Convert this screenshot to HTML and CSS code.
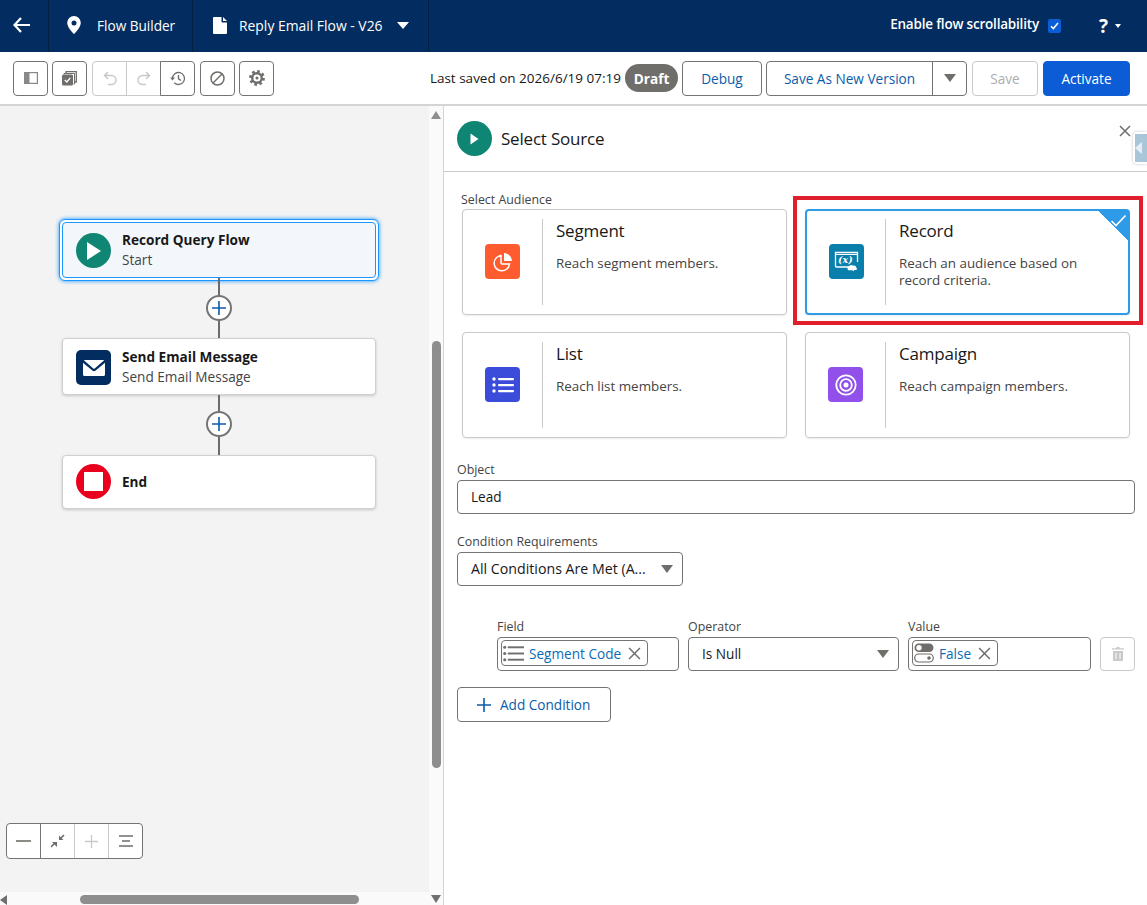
FILE: index.html
```html
<!DOCTYPE html>
<html lang="en">
<head>
    <meta charset="UTF-8">
    <meta name="viewport" content="width=device-width, initial-scale=1.0">
    <title>Flow Builder</title>
    <link rel="stylesheet" href="styles.css">
</head>
<body>

<header class="topbar">
    <div class="top-cell back-cell">
        <svg width="20" height="18" viewBox="0 0 20 18"><path d="M9 2 2.5 9 9 16M3 9h15" fill="none" stroke="#fff" stroke-width="2.2"/></svg>
    </div>
    <div class="top-cell app-cell">
        <svg width="14" height="18" viewBox="0 0 14 18"><path fill-rule="evenodd" fill="#fff" d="M7 0a6.8 6.8 0 0 0-6.8 6.8C.2 11 5 16.300 7 18c2-1.700 6.800-7 6.800-11.200A6.800 6.800 0 0 0 7 0zm0 4.400a2.500 2.500 0 1 1 0 5 2.500 2.500 0 0 1 0-5z"/></svg>
        <span>Flow Builder</span>
    </div>
    <div class="top-cell file-cell">
        <svg width="14" height="17" viewBox="0 0 14 17"><path fill="#fff" d="M1 0h7.500v4.500a1 1 0 0 0 1 1H14V16a1 1 0 0 1-1 1H1a1 1 0 0 1-1-1V1a1 1 0 0 1 1-1zm9 0 4 4h-4z"/></svg>
        <span>Reply Email Flow - V26</span>
        <i class="caret-white"></i>
    </div>
    <div class="top-right">
        <span class="scroll-label">Enable flow scrollability</span>
        <span class="check-box">
            <svg width="9" height="8" viewBox="0 0 9 8"><path d="M1 4.200 3.400 6.600 8 1" fill="none" stroke="#fff" stroke-width="1.500"/></svg>
        </span>
        <span class="help">?</span>
        <i class="caret-small"></i>
    </div>
</header>

<div class="toolbar">
    <button class="tool-btn">
        <svg width="14" height="12" viewBox="0 0 14 12"><rect x=".6" y=".6" width="12.800" height="10.800" fill="none" stroke="#8a8886" stroke-width="1.200"/><rect x="1" y="1" width="4.500" height="10" fill="#8a8886"/></svg>
    </button>
    <button class="tool-btn">
        <svg width="15" height="15" viewBox="0 0 15 15"><path d="M4 2.500V.7h10.300V11h-1.800" fill="none" stroke="#706e6b" stroke-width="1.300"/><path d="M2 3.500V2.500h10.500V13h-1" fill="none" stroke="#706e6b" stroke-width="1"/><rect x="0" y="3.500" width="11" height="11" rx="1.500" fill="#706e6b"/><path d="M2.800 9 4.800 11 8.300 6.800" fill="none" stroke="#fff" stroke-width="1.300"/></svg>
    </button>
    <div class="tool-group">
        <button class="tool-btn off">
            <svg width="14" height="15" viewBox="0 0 14 15"><path d="M5 1 1.500 4.500 5 8M2 4.500h6.500a4.500 4.500 0 0 1 0 9H5" fill="none" stroke="#c9c9c9" stroke-width="1.500"/></svg>
        </button>
        <button class="tool-btn off">
            <svg width="14" height="15" viewBox="0 0 14 15"><path d="M9 1l3.500 3.500L9 8M12 4.500H5.500a4.500 4.500 0 0 0 0 9H9" fill="none" stroke="#c9c9c9" stroke-width="1.500"/></svg>
        </button>
        <button class="tool-btn">
            <svg width="16" height="15" viewBox="0 0 16 15"><path d="M2.500 7.500a6 6 0 1 1 1.800 4.300" fill="none" stroke="#706e6b" stroke-width="1.300"/><path d="M0 6.500h5L2.500 9.500z" fill="#706e6b"/><path d="M8.500 4v3.800l2.500 1.700" fill="none" stroke="#706e6b" stroke-width="1.400"/></svg>
        </button>
    </div>
    <button class="tool-btn">
        <svg width="15" height="15" viewBox="0 0 15 15"><circle cx="7.500" cy="7.500" r="6.500" fill="none" stroke="#706e6b" stroke-width="1.500"/><path d="M3 12 12 3" stroke="#706e6b" stroke-width="1.500"/></svg>
    </button>
    <button class="tool-btn">
        <svg width="16" height="16" viewBox="0 0 16 16"><circle cx="8" cy="8" r="4.800" fill="none" stroke="#706e6b" stroke-width="2.400"/><circle cx="8" cy="8" r="6.600" fill="none" stroke="#706e6b" stroke-width="2.600" stroke-dasharray="2.600 2.580"/><circle cx="8" cy="8" r="1.500" fill="#706e6b"/></svg>
    </button>
    <div class="toolbar-right">
        <span class="saved">Last saved on 2026/6/19 07:19</span>
        <span class="draft-pill">Draft</span>
        <button class="btn debug-btn">Debug</button>
        <div class="split-btn">
            <button class="btn-inner">Save As New Version</button>
            <button class="btn-arrow"><i class="caret-grey"></i></button>
        </div>
        <button class="btn save-btn" disabled>Save</button>
        <button class="btn activate-btn">Activate</button>
    </div>
</div>

<div class="workspace">
    <div class="canvas-area">
        <div class="canvas">
            <div class="flow">
                <div class="node-focus">
                    <div class="node node-start">
                        <span class="node-icon round teal">
                            <svg width="16" height="20" viewBox="0 0 16 20"><path d="M1 1v18l14-9z" fill="#fff"/></svg>
                        </span>
                        <div>
                            <div class="node-title">Record Query Flow</div>
                            <div class="node-sub">Start</div>
                        </div>
                    </div>
                </div>
                <div class="connector first"><span class="add-step"><svg width="16" height="16" viewBox="0 0 16 16"><path d="M8 1v14M1 8h14" stroke="#0b5cab" stroke-width="1.600"/></svg></span></div>
                <div class="node node-email">
                    <span class="node-icon square navy">
                        <svg width="22" height="16" viewBox="0 0 22 16"><path fill="#fff" d="M1.500 0h19c.4 0 .6.300.4.600L11.700 8.500a1 1 0 0 1-1.400 0L1.100.6C.9.300 1.100 0 1.500 0zM0 2.800l9.300 7.700a2.600 2.600 0 0 0 3.400 0L22 2.800V14.500a1.500 1.500 0 0 1-1.500 1.500h-19A1.500 1.500 0 0 1 0 14.500z"/></svg>
                    </span>
                    <div>
                        <div class="node-title">Send Email Message</div>
                        <div class="node-sub">Send Email Message</div>
                    </div>
                </div>
                <div class="connector"><span class="add-step"><svg width="16" height="16" viewBox="0 0 16 16"><path d="M8 1v14M1 8h14" stroke="#0b5cab" stroke-width="1.600"/></svg></span></div>
                <div class="node node-end">
                    <span class="node-icon round red"><i class="stop"></i></span>
                    <div class="node-title">End</div>
                </div>
            </div>
            <div class="zoom-bar">
                <button class="zoom-btn"><svg width="15" height="2" viewBox="0 0 15 2"><path d="M0 1h15" stroke="#706e6b" stroke-width="1.600"/></svg></button>
                <button class="zoom-btn"><svg width="14" height="14" viewBox="0 0 14 14"><path d="M13 1 9 5M0 13l4-4" stroke="#706e6b" stroke-width="1.600"/><path d="M8 1.500V6h4.500zM1 8h5v5z" fill="#706e6b"/></svg></button>
                <button class="zoom-btn"><svg width="13" height="13" viewBox="0 0 13 13"><path d="M6.500 0v13M0 6.500h13" stroke="#c9c9c9" stroke-width="1.300"/></svg></button>
                <button class="zoom-btn"><svg width="14" height="12" viewBox="0 0 14 12"><path d="M0 1h14M3 6h8M0 11h14" stroke="#706e6b" stroke-width="1.500"/></svg></button>
            </div>
        </div>
        <div class="hscroll">
            <i class="arrow-left"></i>
            <span class="hthumb"></span>
        </div>
    </div>

    <div class="vscroll">
        <i class="arrow-up"></i>
        <span class="vthumb"></span>
        <i class="arrow-down"></i>
    </div>

    <aside class="panel">
        <div class="panel-head">
            <span class="panel-icon">
                <svg width="9" height="12" viewBox="0 0 9 12"><path d="M.5.500v11L8.500 6z" fill="#fff"/></svg>
            </span>
            <h2>Select Source</h2>
            <svg class="panel-close" width="12" height="12" viewBox="0 0 12 12"><path d="M1 1l10 10M11 1 1 11" stroke="#706e6b" stroke-width="1.500"/></svg>
            <span class="side-tab"><i></i></span>
        </div>

        <div class="panel-body">
            <div class="audience-label">Select Audience</div>
            <div class="audience-grid">
                <div class="audience-card">
                    <div class="card-icon-col">
                        <span class="card-icon orange">
                            <svg width="22" height="22" viewBox="0 0 22 22"><path d="M9 4.500a7.700 7.700 0 1 0 8.500 8.500H10a1 1 0 0 1-1-1z" fill="none" stroke="#fff" stroke-width="1.500"/><path d="M12 2c4.500.3 7.700 3.500 8 8h-8z" fill="#fff"/></svg>
                        </span>
                    </div>
                    <div class="card-text">
                        <h3>Segment</h3>
                        <p>Reach segment members.</p>
                    </div>
                </div>
                <div class="audience-card selected">
                    <div class="card-icon-col">
                        <span class="card-icon blue">
                            <svg width="25" height="23" viewBox="0 0 25 23"><path d="M14 17H2.500a1 1 0 0 1-1-1V2.500h22V12" fill="none" stroke="#fff" stroke-width="1.300"/><path d="M1.500 4.500h22" stroke="#fff" stroke-width="1"/><path d="M13.500 18c0-1.500 1-2.300 2.200-2.300.500-.900 2.500-1.200 3.300 0 1.500-.500 3.300.500 3.300 2 1 .200 1 2.300-.500 2.400h-1.500l-.8 1.200-1-1h-3.800c-1 0-1.200-1.500-1.200-2.300z" fill="#fff"/><text x="4" y="13" class="x-glyph">(x)</text></svg>
                        </span>
                    </div>
                    <div class="card-text">
                        <h3>Record</h3>
                        <p>Reach an audience based on record criteria.</p>
                    </div>
                    <span class="selected-corner">
                        <svg width="17" height="13" viewBox="0 0 17 13"><path d="M1.500 7 6 11.500 15.500 1.500" fill="none" stroke="#fff" stroke-width="1.700"/></svg>
                    </span>
                </div>
                <div class="audience-card">
                    <div class="card-icon-col">
                        <span class="card-icon indigo">
                            <svg width="22" height="16" viewBox="0 0 22 16"><g fill="#fff"><circle cx="2" cy="2" r="1.700"/><circle cx="2" cy="8" r="1.700"/><circle cx="2" cy="14" r="1.700"/><rect x="6" y="1" width="16" height="2.200" rx="1"/><rect x="6" y="7" width="16" height="2.200" rx="1"/><rect x="6" y="13" width="16" height="2.200" rx="1"/></g></svg>
                        </span>
                    </div>
                    <div class="card-text">
                        <h3>List</h3>
                        <p>Reach list members.</p>
                    </div>
                </div>
                <div class="audience-card">
                    <div class="card-icon-col">
                        <span class="card-icon purple">
                            <svg width="22" height="22" viewBox="0 0 22 22"><circle cx="11" cy="11" r="9.700" fill="none" stroke="#fff" stroke-width="1.800"/><circle cx="11" cy="11" r="5.800" fill="none" stroke="#fff" stroke-width="1.800"/><circle cx="11" cy="11" r="2.500" fill="#fff"/></svg>
                        </span>
                    </div>
                    <div class="card-text">
                        <h3>Campaign</h3>
                        <p>Reach campaign members.</p>
                    </div>
                </div>
            </div>

            <div class="form-block">
                <label>Object</label>
                <div class="input">Lead</div>
            </div>

            <div class="form-block requirement">
                <label>Condition Requirements</label>
                <div class="input select-box">
                    <span>All Conditions Are Met (A...</span>
                    <i class="caret-grey"></i>
                </div>
            </div>

            <div class="condition-row">
                <div class="cond-col field-col">
                    <label>Field</label>
                    <div class="input pill-input">
                        <span class="pill">
                            <svg width="21" height="17" viewBox="0 0 22 17"><g fill="#706e6b"><circle cx="1.800" cy="2" r="1.600"/><circle cx="1.800" cy="8.500" r="1.600"/><circle cx="1.800" cy="15" r="1.600"/><rect x="5" y="1" width="17" height="2"/><rect x="5" y="7.500" width="17" height="2"/><rect x="5" y="14" width="17" height="2"/></g></svg>
                            <a>Segment Code</a>
                            <svg width="13" height="13" viewBox="0 0 12 12"><path d="M1 1l10 10M11 1 1 11" stroke="#706e6b" stroke-width="1.400"/></svg>
                        </span>
                    </div>
                </div>
                <div class="cond-col op-col">
                    <label>Operator</label>
                    <div class="input select-box">
                        <span>Is Null</span>
                        <i class="caret-grey"></i>
                    </div>
                </div>
                <div class="cond-col value-col">
                    <label>Value</label>
                    <div class="input pill-input">
                        <span class="pill">
                            <svg width="20" height="20" viewBox="0 0 20 20"><rect x=".5" y=".5" width="19" height="8.500" rx="4.250" fill="#706e6b"/><circle cx="5" cy="4.700" r="2.700" fill="#fff"/><rect x=".7" y="11" width="18.600" height="8" rx="4" fill="#fff" stroke="#706e6b" stroke-width="1.200"/><circle cx="15" cy="15" r="1.800" fill="#706e6b"/></svg>
                            <a>False</a>
                            <svg width="13" height="13" viewBox="0 0 12 12"><path d="M1 1l10 10M11 1 1 11" stroke="#706e6b" stroke-width="1.400"/></svg>
                        </span>
                    </div>
                </div>
                <button class="trash-btn">
                    <svg width="12" height="14" viewBox="0 0 12 14"><path fill="#c9c9c9" d="M4.500 0h3v1.200H12v1.300H0V1.200h4.500zM1 4h10v9a1 1 0 0 1-1 1H2a1 1 0 0 1-1-1zm2.500 2v6h1V6zm4 0v6h1V6z"/></svg>
                </button>
            </div>

            <button class="add-condition">
                <svg width="14" height="14" viewBox="0 0 14 14"><path d="M7 0v14M0 7h14" stroke="#0b5cab" stroke-width="1.600"/></svg>
                Add Condition
            </button>
        </div>
    </aside>
</div>

</body>
</html>
```

FILE: styles.css
```css
* {
    box-sizing: border-box;
}
body {
    margin: 0;
    width: 1147px;
    height: 905px;
    overflow: hidden;
    display: flex;
    flex-direction: column;
    font-family: "Open Sans", Arial, sans-serif;
    font-size: 13.6px;
    color: #181818;
    background: #fff;
}
button {
    font-family: inherit;
    cursor: pointer;
}
h2, h3, p {
    margin: 0;
    font-weight: 400;
}
label {
    display: block;
    margin-bottom: 2px;
    font-size: 12.4px;
    line-height: 16px;
    color: #444;
}

/* top bar */
.topbar {
    height: 52px;
    flex: none;
    display: flex;
    align-items: stretch;
    background: #032d60;
    color: #fff;
}
.top-cell {
    display: flex;
    align-items: center;
    padding-bottom: 2px;
    border-right: 1px solid #021f44;
}
.back-cell {
    width: 49px;
    padding-left: 12px;
}
.app-cell {
    width: 144px;
    padding-left: 18px;
    gap: 16px;
}
.file-cell {
    width: 236px;
    padding-left: 20px;
    gap: 12px;
    font-size: 13.9px;
}
.caret-white {
    margin-left: 2px;
    border-left: 6px solid transparent;
    border-right: 6px solid transparent;
    border-top: 7px solid #fff;
}
.top-right {
    margin-left: auto;
    display: flex;
    align-items: center;
    padding-right: 26px;
}
.scroll-label {
    padding-bottom: 4px;
    font-size: 13.5px;
    font-weight: 600;
    letter-spacing: -0.2px;
}
.check-box {
    width: 13px;
    height: 14px;
    margin-left: 9px;
    border-radius: 2px;
    background: #0b5cd5;
    display: flex;
    align-items: center;
    justify-content: center;
}
.help {
    margin-left: 38px;
    font-size: 19px;
    font-weight: 700;
}
.caret-small {
    margin-left: 7px;
    border-left: 3px solid transparent;
    border-right: 3px solid transparent;
    border-top: 4px solid #fff;
}

/* toolbar */
.toolbar {
    height: 54px;
    flex: none;
    display: flex;
    align-items: center;
    gap: 4px;
    padding: 0 17px 0 13px;
    border-bottom: 2px solid #d4d4d4;
}
.tool-btn {
    width: 35px;
    height: 35px;
    padding: 0;
    background: #fff;
    border: 1px solid #747474;
    border-radius: 4px;
    display: flex;
    align-items: center;
    justify-content: center;
}
.tool-btn.off {
    border-color: #c9c9c9;
}
.tool-group {
    display: flex;
    margin: 0 1px;
}
.tool-group .tool-btn {
    border-radius: 0;
    margin-left: -1px;
}
.tool-group .tool-btn:first-child {
    margin-left: 0;
    border-radius: 4px 0 0 4px;
}
.tool-group .tool-btn:last-child {
    border-radius: 0 4px 4px 0;
}
.toolbar-right {
    margin-left: auto;
    display: flex;
    align-items: center;
    gap: 4px;
}
.saved {
    font-size: 13.5px;
    white-space: nowrap;
}
.draft-pill {
    height: 28px;
    width: 53px;
    border-radius: 14px;
    background: #706e6b;
    color: #fff;
    font-weight: 700;
    display: flex;
    align-items: center;
    justify-content: center;
}
.btn {
    height: 35px;
    background: #fff;
    border: 1px solid #747474;
    border-radius: 4px;
    color: #0b5cab;
    font-size: 13.6px;
    padding: 0;
}
.debug-btn {
    width: 80px;
}
.split-btn {
    width: 201px;
    height: 35px;
    display: flex;
    border: 1px solid #747474;
    border-radius: 4px;
    background: #fff;
}
.btn-inner {
    flex: 1;
    border: 0;
    background: none;
    color: #0b5cab;
    font-size: 13.6px;
    padding: 0;
}
.btn-arrow {
    width: 34px;
    border: 0;
    border-left: 1px solid #747474;
    background: none;
    padding: 0;
    display: flex;
    align-items: center;
    justify-content: center;
}
.caret-grey {
    display: block;
    border-left: 6px solid transparent;
    border-right: 6px solid transparent;
    border-top: 8px solid #706e6b;
}
.save-btn {
    width: 66px;
    margin-left: 1px;
    border-color: #c9c9c9;
    color: #aeaeae;
}
.activate-btn {
    width: 87px;
    margin-left: 1px;
    background: #0b5cd5;
    border-color: #0b5cd5;
    color: #fff;
}

/* canvas */
.workspace {
    flex: 1;
    display: flex;
    min-height: 0;
}
.canvas-area {
    width: 429px;
    display: flex;
    flex-direction: column;
}
.canvas {
    position: relative;
    flex: 1;
    background: #f3f3f3;
}
.flow {
    width: 314px;
    margin: 116px 0 0 62px;
}
.node {
    display: flex;
    align-items: center;
    gap: 11px;
    padding: 1px 0 0 13px;
    background: #fff;
    border: 1px solid #d0d0d0;
    border-radius: 4px;
    box-shadow: 0 1px 3px rgba(0, 0, 0, 0.18);
}
.node-focus {
    margin: -3px;
    padding: 2px;
    border: 1px solid #1b96ff;
    border-radius: 6px;
    box-shadow: 0 0 4px #1b96ff;
    background: #fff;
}
.node-start {
    height: 56px;
    background: #f3f6fb;
    border: 1px solid #1b96ff;
    box-shadow: none;
}
.node-email {
    height: 57px;
    padding-top: 2px;
}
.node-end {
    height: 54px;
    padding: 0 0 1px 13px;
}
.node-title {
    font-weight: 700;
    line-height: 18px;
    color: #181818;
}
.node-sub {
    line-height: 22px;
    color: #444;
}
.node-icon {
    width: 35px;
    height: 35px;
    flex: none;
    display: flex;
    align-items: center;
    justify-content: center;
}
.round {
    border-radius: 50%;
}
.square {
    border-radius: 5px;
}
.teal {
    background: #0f8574;
}
.navy {
    background: #032d60;
}
.red {
    background: #ea001e;
}
.stop {
    width: 19px;
    height: 19px;
    background: #fff;
}
.connector {
    position: relative;
    height: 60px;
    width: 2px;
    margin-left: 156px;
    background: #6b6b6b;
}
.add-step {
    position: absolute;
    left: -12px;
    top: 16px;
    width: 26px;
    height: 26px;
    border: 2px solid #747474;
    border-radius: 50%;
    background: #fff;
    display: flex;
    align-items: center;
    justify-content: center;
}
.connector.first .add-step {
    top: 17px;
}
.zoom-bar {
    position: absolute;
    left: 6px;
    top: 717px;
    display: flex;
    border: 1px solid #747474;
    border-radius: 4px;
    background: #fff;
}
.zoom-btn {
    width: 34px;
    height: 34px;
    padding: 0;
    border: 0;
    border-left: 1px solid #747474;
    background: none;
    display: flex;
    align-items: center;
    justify-content: center;
}
.zoom-btn:first-child {
    width: 33px;
    border-left: 0;
}
.zoom-btn:nth-child(3) {
    border-left-color: #c9c9c9;
}
.zoom-btn:nth-child(4) {
    border-left-color: #c9c9c9;
}

/* scrollbars */
.hscroll {
    height: 13px;
    flex: none;
    background: #fafafa;
    display: flex;
    align-items: center;
    padding-top: 2px;
}
.hthumb {
    width: 279px;
    height: 9px;
    margin-left: 73px;
    border-radius: 5px;
    background: #8e8e8e;
}
.arrow-left {
    border-top: 5px solid transparent;
    border-bottom: 5px solid transparent;
    border-right: 7px solid #6f6f6f;
}
.vscroll {
    width: 15px;
    flex: none;
    display: flex;
    flex-direction: column;
    align-items: center;
    background: #fafafa;
    border-right: 1px solid #d4d4d4;
    padding: 5px 0 2px;
}
.arrow-up, .arrow-down {
    border-left: 5px solid transparent;
    border-right: 5px solid transparent;
}
.arrow-up {
    border-bottom: 8px solid #8e8e8e;
}
.arrow-down {
    margin-top: auto;
    border-top: 8px solid #6f6f6f;
}
.vthumb {
    width: 9px;
    height: 427px;
    margin-top: 222px;
    border-radius: 5px;
    background: #8e8e8e;
}

/* side panel */
.panel {
    flex: 1;
    min-width: 0;
    background: #fff;
}
.panel-head {
    position: relative;
    height: 66px;
    display: flex;
    align-items: center;
    gap: 9px;
    padding-left: 13px;
    border-bottom: 1px solid #c9c9c9;
}
.panel-head h2 {
    font-size: 17px;
    letter-spacing: -0.2px;
}
.panel-icon {
    width: 35px;
    height: 35px;
    border-radius: 50%;
    background: #0f8574;
    display: flex;
    align-items: center;
    justify-content: center;
}
.panel-close {
    position: absolute;
    right: 16px;
    top: 19px;
}
.side-tab {
    position: absolute;
    right: 0;
    top: 26px;
    width: 14px;
    height: 32px;
    padding: 2px 0 2px 2px;
    background: #fff;
    border-radius: 4px 0 0 4px;
    box-shadow: 0 0 3px rgba(0, 0, 0, 0.25);
}
.side-tab i {
    display: block;
    height: 100%;
    padding-top: 8px;
    background: #a9c6d8;
}
.side-tab i::before {
    content: "";
    display: block;
    width: 0;
    border-top: 6px solid transparent;
    border-bottom: 6px solid transparent;
    border-right: 7px solid #e4eef4;
}
.panel-body {
    padding: 20px 12px 0 13px;
}
.audience-label {
    font-size: 12.4px;
    line-height: 16px;
    margin: 0 0 1px 4px;
    color: #444;
}
.audience-grid {
    display: grid;
    grid-template-columns: 325px 325px;
    grid-auto-rows: 106px;
    column-gap: 18px;
    row-gap: 17px;
    margin-left: 5px;
}
.audience-card {
    position: relative;
    display: flex;
    padding: 9px 0;
    border: 1px solid #c9c9c9;
    border-radius: 4px;
    box-shadow: 0 1px 2px rgba(0, 0, 0, 0.08);
}
.audience-card.selected {
    border: 2px solid #2e9be8;
    padding: 8px 0;
}
/* red annotation box around the chosen card */
.audience-card.selected::after {
    content: "";
    position: absolute;
    inset: -15px -15px -12px -14px;
    border: 4px solid #e01f2d;
    pointer-events: none;
}
.card-icon-col {
    width: 80px;
    flex: none;
    border-right: 1px solid #c9c9c9;
    display: flex;
    justify-content: center;
    padding-top: 25px;
}
.selected .card-icon-col {
    width: 79px;
}
.card-icon {
    width: 35px;
    height: 35px;
    border-radius: 4px;
    display: flex;
    align-items: center;
    justify-content: center;
}
.orange { background: #fe5c2e; }
.blue { background: #0b7fac; }
.indigo { background: #3b4cdb; }
.purple { background: #9050e9; }
.x-glyph {
    font-family: "DejaVu Serif", serif;
    font-size: 9.500px;
    font-style: italic;
    font-weight: 700;
    fill: #fff;
}
.card-text {
    padding: 0 14px 0 13px;
}
.card-text h3 {
    font-size: 17px;
    line-height: 24px;
    letter-spacing: -0.2px;
}
.card-text p {
    margin-top: 12px;
    font-size: 13.4px;
    line-height: 17px;
    color: #444;
}
.selected-corner {
    position: absolute;
    top: -1px;
    right: -1px;
    width: 32px;
    height: 32px;
    background: linear-gradient(45deg, transparent 50%, #2e9be8 50%);
    border-top-right-radius: 4px;
}
.selected-corner svg {
    position: absolute;
    top: 4px;
    right: 2px;
}
.form-block {
    margin-top: 24px;
}
.form-block.requirement {
    margin-top: 20px;
}
.input {
    height: 34px;
    display: flex;
    align-items: center;
    padding: 0 0 2px 13px;
    background: #fff;
    border: 1px solid #747474;
    border-radius: 4px;
    color: #181818;
}
.select-box {
    justify-content: space-between;
    padding: 0 9px 2px 13px;
}
.select-box .caret-grey {
    margin-top: 2px;
}
.requirement .input {
    width: 226px;
    font-size: 14.2px;
}
.condition-row {
    display: flex;
    align-items: flex-end;
    gap: 9px;
    margin: 33px 0 0 40px;
}
.field-col { width: 182px; }
.op-col { width: 211px; }
.value-col { width: 183px; }
.pill-input {
    padding-left: 3px;
}
.pill {
    height: 26px;
    display: flex;
    align-items: center;
    gap: 5px;
    padding: 0 6px 0 1px;
    border: 1px solid #747474;
    border-radius: 4px;
}
.pill a {
    margin-right: 2px;
    color: #0b6cb5;
}
.trash-btn {
    width: 35px;
    height: 34px;
    padding: 0;
    background: #fff;
    border: 1px solid #c9c9c9;
    border-radius: 4px;
    display: flex;
    align-items: center;
    justify-content: center;
}
.add-condition {
    margin-top: 16px;
    width: 154px;
    height: 35px;
    padding: 0 0 0 19px;
    display: flex;
    align-items: center;
    gap: 9px;
    background: #fff;
    border: 1px solid #747474;
    border-radius: 4px;
    color: #0b5cab;
    font-size: 13.6px;
}
```
